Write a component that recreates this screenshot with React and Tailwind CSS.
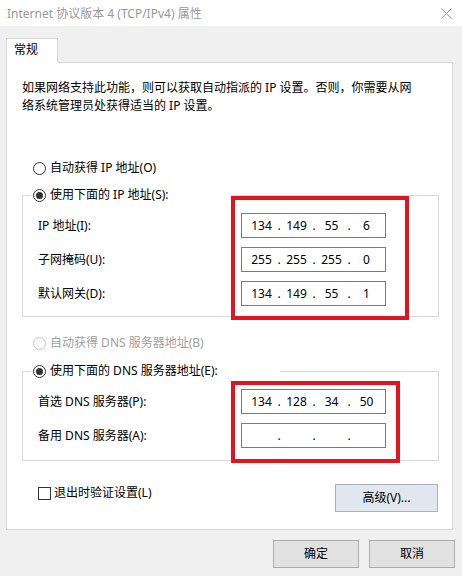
import React from "react";

const FONT = { fontFamily: '"Noto Sans", "Noto Sans CJK SC", sans-serif' };

function Radio({ checked, disabled }) {
    return (
        <span
            className={
                disabled
                    ? "w-[13px] h-[13px] rounded-full border border-[#c4c4c4] flex items-center justify-center shrink-0"
                    : "w-[13px] h-[13px] rounded-full border border-[#333333] flex items-center justify-center shrink-0"
            }
        >
            {checked && <span className="w-[7px] h-[7px] rounded-full bg-[#333333]" />}
        </span>
    );
}

function IpBox({ parts }) {
    return (
        <div className="w-[145px] h-[25px] border border-[#7a7a7a] bg-white flex items-center pl-[5px] text-[12px] text-black">
            {parts.map((p, i) => (
                <React.Fragment key={i}>
                    {i > 0 && <span className="w-[6px] text-center">.</span>}
                    <span className="w-[29px] text-center">{p}</span>
                </React.Fragment>
            ))}
        </div>
    );
}

function Row({ label, parts }) {
    return (
        <div className="grid grid-cols-[203px_145px] items-center pl-[15px]">
            <span className="text-[12px] leading-[18px]">{label}</span>
            <IpBox parts={parts} />
        </div>
    );
}

export default function App() {
    return (
        <div className="w-[462px] h-[576px] bg-[#f0f0f0] flex flex-col text-black" style={FONT}>
            {/* Title bar */}
            <div className="h-[26px] bg-white flex items-center justify-between pl-[7px] pr-[10px] pt-[2px]">
                <span className="text-[12px] text-[#999999]">Internet 协议版本 4 (TCP/IPv4) 属性</span>
                <svg width="11" height="11" viewBox="0 0 11 11" className="mt-[-1px]">
                    <path d="M0.5 0.5 L10.5 10.5 M10.5 0.5 L0.5 10.5" stroke="#9a9a9a" strokeWidth="1" />
                </svg>
            </div>

            {/* Tab */}
            <div className="pl-[6px] pt-[12px]">
                <div className="relative z-10 -mb-px w-[52px] h-[25px] bg-white border border-b-0 border-[#d9d9d9] pl-[7px] text-[12px] leading-[22px]">
                    常规
                </div>
            </div>

            {/* Panel */}
            <div className="relative ml-[6px] w-[447px] h-[468px] bg-white border border-[#d9d9d9] pl-[15px] pr-[13px] pt-[16px]">
                <p className="text-[12px] leading-[18px]">
                    如果网络支持此功能，则可以获取自动指派的 IP 设置。否则，你需要从网
                    <br />
                    络系统管理员处获得适当的 IP 设置。
                </p>

                <div className="mt-[44px] ml-[11px] h-[18px] flex items-center gap-[4px] text-[12px]">
                    <Radio />
                    <span>自动获得 IP 地址(O)</span>
                </div>

                <fieldset className="mt-[9px] border border-[#dcdcdc] pb-[10px]">
                    <legend className="ml-[8px] pl-[2px] w-[200px] h-[18px] flex items-center gap-[4px] text-[12px]">
                        <Radio checked />
                        <span>使用下面的 IP 地址(S):</span>
                    </legend>
                    <div className="mt-[9px] flex flex-col gap-[9px]">
                        <Row label="IP 地址(I):" parts={["134", "149", "55", "6"]} />
                        <Row label="子网掩码(U):" parts={["255", "255", "255", "0"]} />
                        <Row label="默认网关(D):" parts={["134", "149", "55", "1"]} />
                    </div>
                </fieldset>

                <div className="mt-[17px] ml-[11px] h-[18px] flex items-center gap-[4px] text-[12px] text-[#a0a0a0]">
                    <Radio disabled />
                    <span>自动获得 DNS 服务器地址(B)</span>
                </div>

                <fieldset className="mt-[10px] border border-[#dcdcdc] pb-[12px]">
                    <legend className="ml-[8px] pl-[2px] w-[249px] h-[18px] flex items-center gap-[4px] text-[12px]">
                        <Radio checked />
                        <span>使用下面的 DNS 服务器地址(E):</span>
                    </legend>
                    <div className="mt-[9px] flex flex-col gap-[9px]">
                        <Row label="首选 DNS 服务器(P):" parts={["134", "128", "34", "50"]} />
                        <Row label="备用 DNS 服务器(A):" parts={["", "", "", ""]} />
                    </div>
                </fieldset>

                <div className="mt-[23px] flex items-start justify-between pl-[16px] pr-[1px]">
                    <div className="h-[18px] flex items-center gap-[3px] text-[12px]">
                        <span className="w-[13px] h-[13px] border border-[#333333] bg-white" />
                        <span>退出时验证设置(L)</span>
                    </div>
                    <button className="w-[103px] h-[28px] bg-[#e0e7ef] border border-[#a9b0b8] text-[12px]">
                        高级(V)...
                    </button>
                </div>

                {/* Red annotation boxes */}
                <div className="absolute left-[224px] top-[133px] w-[178px] h-[124px] border-4 border-[#e3141c]" />
                <div className="absolute left-[224px] top-[318px] w-[169px] h-[82px] border-4 border-[#e3141c]" />
            </div>

            {/* Bottom buttons */}
            <div className="mt-[10px] flex justify-end gap-[10px] pr-[7px]">
                <button className="w-[86px] h-[28px] bg-[#e1e1e1] border border-[#adadad] text-[12px]">确定</button>
                <button className="w-[86px] h-[28px] bg-[#e1e1e1] border border-[#adadad] text-[12px]">取消</button>
            </div>
        </div>
    );
}
